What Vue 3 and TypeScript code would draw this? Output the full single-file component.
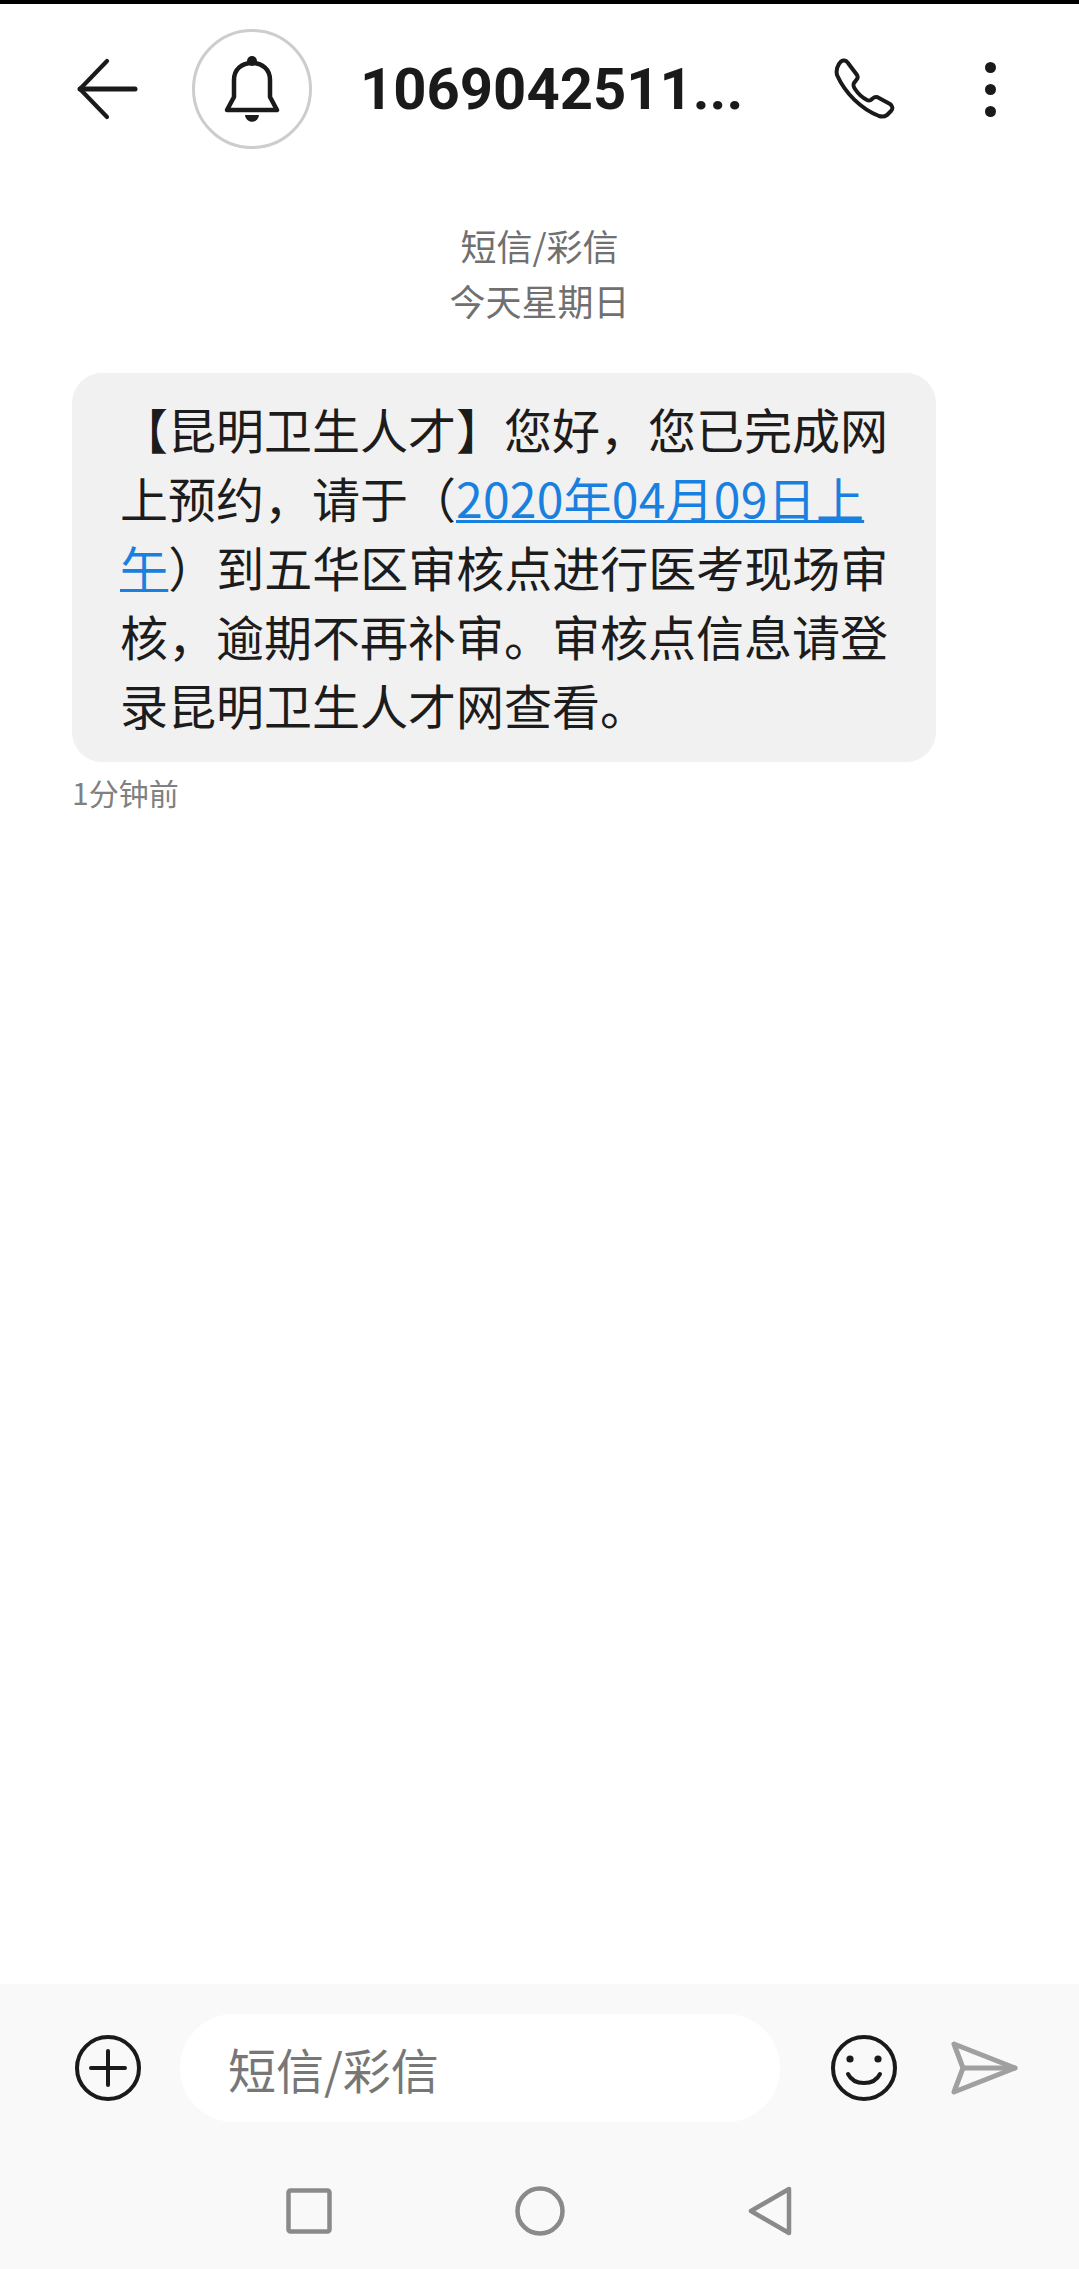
<script setup lang="ts">
const dayLabels: string[] = ['短信/彩信', '今天星期日']
</script>

<template>
  <div class="screen">
    <header class="top-bar">
      <button class="icon-btn back" aria-label="返回">
        <svg width="64" height="62" viewBox="0 0 64 62" fill="none" stroke="#1a1a1a" stroke-width="4.2" stroke-linecap="round" stroke-linejoin="round">
          <path d="M31 3 L4 31 L31 59" />
          <path d="M4 31 H59" stroke-width="5" />
        </svg>
      </button>
      <div class="avatar">
        <svg width="58" height="68" viewBox="0 0 58 68" fill="none" stroke="#1a1a1a" stroke-width="4.5" stroke-linejoin="round">
          <path d="M11 42 V25 C11 14 19 8 29 8 C39 8 47 14 47 25 V42 L54 55 H4 Z" />
          <circle cx="29" cy="6" r="5" fill="#1a1a1a" stroke="none" />
          <path d="M22 60 H36 C35 69 23 69 22 60 Z" fill="#1a1a1a" stroke="none" />
        </svg>
      </div>
      <h1 class="title">1069042511...</h1>
      <button class="icon-btn phone" aria-label="呼叫">
        <svg width="64" height="64" viewBox="0 0 64 64" fill="none" stroke="#1a1a1a" stroke-width="4" stroke-linejoin="round">
          <path d="M8 4.5 C10 3 13 3 15 6 L24 18 C25 20 25 21 24 22 L21 26 C20 28 20 29 22 32 C26 38 30 41 34 43 C36 44 37 44 39 42 L41 40.5 C43 39.5 44 39.5 46 41 L57 47 C60 49 60 52 58 54 L54 58 C51 60 49 60 46 59 C28 52 12 36 4 18 C3 14 4 8 8 4.5 Z" />
        </svg>
      </button>
      <div class="more" aria-label="更多">
        <span></span><span></span><span></span>
      </div>
    </header>

    <main class="thread">
      <div class="day">
        <p v-for="label in dayLabels" :key="label">{{ label }}</p>
      </div>
      <div class="bubble">【昆明卫生人才】您好，您已完成网上预约，请于（<a class="link">2020年04月09日上午</a>）到五华区审核点进行医考现场审核，逾期不再补审。审核点信息请登录昆明卫生人才网查看。</div>
      <p class="stamp">1分钟前</p>
    </main>

    <footer class="bottom">
      <div class="composer">
        <svg class="plus" width="68" height="68" viewBox="0 0 68 68" fill="none" stroke="#1a1a1a" stroke-linecap="round">
          <circle cx="34" cy="34" r="31" stroke-width="4" />
          <path d="M34 17 V51 M17 34 H51" stroke-width="4" />
        </svg>
        <div class="input">短信/彩信</div>
        <svg class="smile" width="68" height="68" viewBox="0 0 68 68" fill="none" stroke="#1a1a1a" stroke-linecap="round">
          <circle cx="34" cy="34" r="31" stroke-width="4" />
          <circle cx="20" cy="25" r="3.6" fill="#1a1a1a" stroke="none" />
          <circle cx="48" cy="25" r="3.6" fill="#1a1a1a" stroke="none" />
          <path d="M18 40 C24 52 44 52 50 40" stroke-width="4" />
        </svg>
        <svg class="send" width="68" height="56" viewBox="0 0 68 56" fill="none" stroke="#a0a0a0" stroke-width="5" stroke-linejoin="round" stroke-linecap="round">
          <path d="M4 4 L65 28 L4 52 L13 28 Z" />
          <path d="M13 28 H65" />
        </svg>
      </div>
      <nav class="nav-keys">
        <svg width="46" height="46" viewBox="0 0 46 46" fill="none" stroke="#8a8a8a" stroke-width="4.5" stroke-linejoin="round">
          <rect x="2.5" y="2.5" width="41" height="41" rx="2" />
        </svg>
        <svg width="50" height="50" viewBox="0 0 50 50" fill="none" stroke="#8a8a8a" stroke-width="4.5">
          <circle cx="25" cy="25" r="22.5" />
        </svg>
        <svg width="44" height="50" viewBox="0 0 44 50" fill="none" stroke="#8a8a8a" stroke-width="4.5" stroke-linejoin="round">
          <path d="M41 3 V47 L3 25 Z" />
        </svg>
      </nav>
    </footer>
  </div>
</template>

<style scoped>
.screen {
  width: 1079px;
  height: 2269px;
  box-sizing: border-box;
  border-top: 4px solid #000;
  display: flex;
  flex-direction: column;
  background: #fff;
  font-family: "Noto Sans CJK SC", "Noto Sans", sans-serif;
}

.top-bar {
  height: 170px;
  flex-shrink: 0;
  display: flex;
  align-items: center;
  padding: 0 0 0 76px;
}

.icon-btn {
  padding: 0;
  border: none;
  background: transparent;
  display: flex;
}

.avatar {
  width: 120px;
  height: 120px;
  box-sizing: border-box;
  margin-left: 52px;
  border: 3px solid #cdcdcd;
  border-radius: 50%;
  display: flex;
  align-items: center;
  justify-content: center;
}

.title {
  width: 473px;
  margin: 0 0 0 48px;
  font-family: Roboto, "Noto Sans", sans-serif;
  font-size: 58px;
  font-weight: 700;
  color: #1a1a1a;
  white-space: nowrap;
}

.more {
  margin-left: 88px;
  display: flex;
  flex-direction: column;
  gap: 11px;
}

.more span {
  width: 11px;
  height: 11px;
  border-radius: 50%;
  background: #1a1a1a;
}

.thread {
  flex: 1;
  padding: 44px 0 0 72px;
}

.day {
  width: 935px;
  text-align: center;
  font-size: 36px;
  line-height: 55px;
  color: #707070;
}

.day p {
  margin: 0;
}

.bubble {
  width: 864px;
  box-sizing: border-box;
  margin-top: 45px;
  padding: 21px 44px 23px 48px;
  background: #f1f1f1;
  border-radius: 30px;
  font-size: 48px;
  line-height: 69px;
  color: #1c1c1c;
}

.link {
  color: #1a80e0;
  text-decoration: underline;
  text-decoration-thickness: 3px;
  letter-spacing: 0.25px;
}

.stamp {
  margin: 10px 0 0;
  font-size: 30px;
  line-height: 40px;
  color: #808080;
}

.bottom {
  height: 285px;
  flex-shrink: 0;
  background: #f9f9f9;
}

.composer {
  height: 168px;
  display: flex;
  align-items: center;
  padding-left: 74px;
}

.input {
  width: 600px;
  height: 108px;
  box-sizing: border-box;
  margin-left: 38px;
  padding-left: 48px;
  border-radius: 54px;
  background: #fff;
  font-size: 48px;
  line-height: 108px;
  color: #777;
}

.smile {
  margin-left: 50px;
}

.send {
  margin-left: 52px;
}

.nav-keys {
  display: flex;
  align-items: center;
  padding: 34px 0 0 286px;
  gap: 183px;
}
</style>
